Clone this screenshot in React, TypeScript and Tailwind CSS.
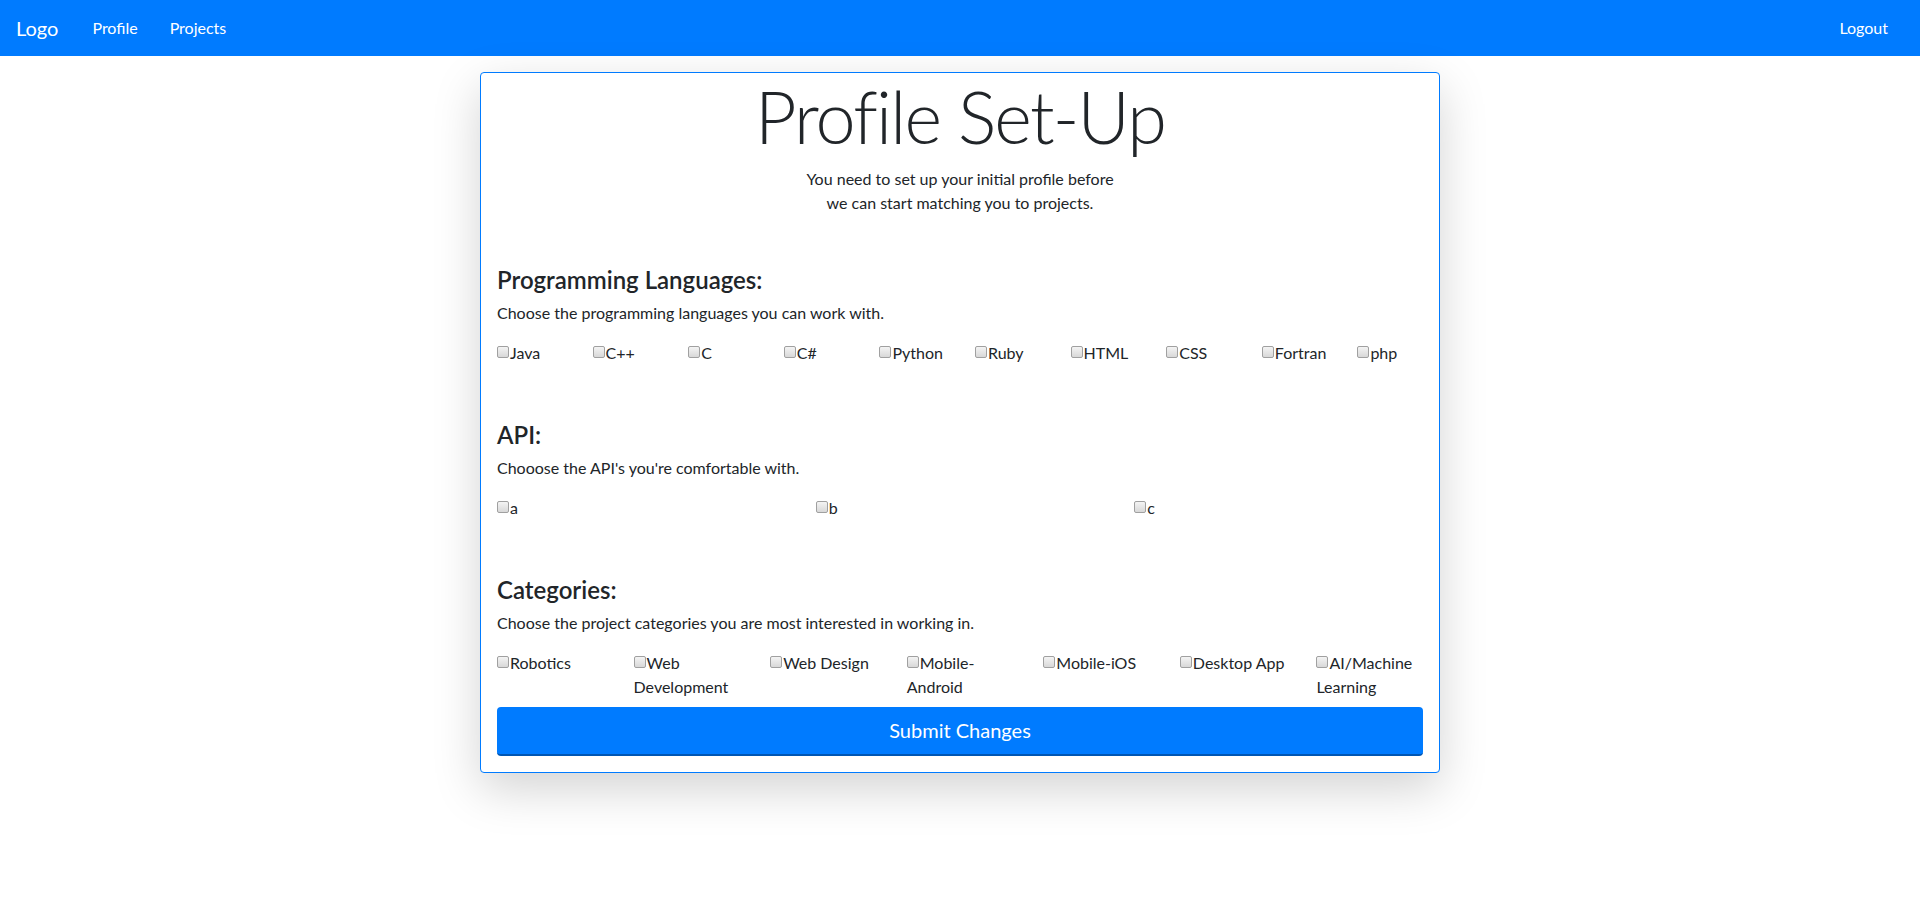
import { useState } from 'react';

const languages = ['Java', 'C++', 'C', 'C#', 'Python', 'Ruby', 'HTML', 'CSS', 'Fortran', 'php'];
const apis = ['a', 'b', 'c'];
const categories = ['Robotics', 'Web Development', 'Web Design', 'Mobile-Android', 'Mobile-iOS', 'Desktop App', 'AI/Machine Learning'];

function Check({ label }: { label: string }) {
  const [checked, setChecked] = useState(false);
  return (
    <label className="block text-base leading-6 text-[#212529] cursor-pointer">
      <input
        type="checkbox"
        checked={checked}
        onChange={() => setChecked(!checked)}
        className="appearance-none inline-block w-[12px] h-[12px] mb-[1px] mr-[1px] rounded-[2px] border border-[#a0a0a0] bg-gradient-to-b from-[#f4f4f4] to-[#d8d8d8] checked:bg-[#007bff] checked:border-[#007bff]"
      />
      {label}
    </label>
  );
}

function Section({ title, desc, items, cols, top }: { title: string; desc: string; items: string[]; cols: string; top: string }) {
  return (
    <div className={top}>
      <h4 className="text-2xl font-semibold leading-[1.2] mb-[6px] text-[#212529]">{title}</h4>
      <p className="text-base leading-6 mb-4 text-[#212529]">{desc}</p>
      <div className={`grid ${cols} -mx-[15px]`}>
        {items.map(item => (
          <div key={item} className="px-[15px]">
            <Check label={item} />
          </div>
        ))}
      </div>
    </div>
  );
}

export default function App() {
  return (
    <div className="min-h-screen bg-white font-['Segoe_UI','Lato','Noto_Sans',sans-serif] text-[#212529]">
      <nav className="h-14 bg-[#007bff] flex items-center px-4 text-white">
        <span className="text-xl mr-[18px]">Logo</span>
        <a className="px-4 text-base">Profile</a>
        <a className="px-4 text-base">Projects</a>
        <a className="px-4 text-base ml-auto">Logout</a>
      </nav>

      <div className="w-[960px] mx-auto mt-4 bg-white border border-[#007bff] rounded px-4 pb-4 shadow-[0_16px_48px_rgba(0,0,0,0.175)]">
        <h1 className="text-[72px] font-light leading-[1.2] tracking-[-1.8px] text-center mb-2">Profile Set-Up</h1>
        <p className="text-center text-base leading-6">
          You need to set up your initial profile before
          <br />
          we can start matching you to projects.
        </p>

        <Section
          top="mt-[51px]"
          title="Programming Languages:"
          desc="Choose the programming languages you can work with."
          items={languages}
          cols="grid-cols-10"
        />
        <Section
          top="mt-[56px]"
          title="API:"
          desc="Chooose the API's you're comfortable with."
          items={apis}
          cols="grid-cols-3"
        />
        <Section
          top="mt-[56px]"
          title="Categories:"
          desc="Choose the project categories you are most interested in working in."
          items={categories}
          cols="grid-cols-7"
        />

        <button className="mt-[8px] w-full h-[49px] bg-[#007bff] text-white text-xl rounded border-b-2 border-b-[#0056b3]">
          Submit Changes
        </button>
      </div>
    </div>
  );
}
